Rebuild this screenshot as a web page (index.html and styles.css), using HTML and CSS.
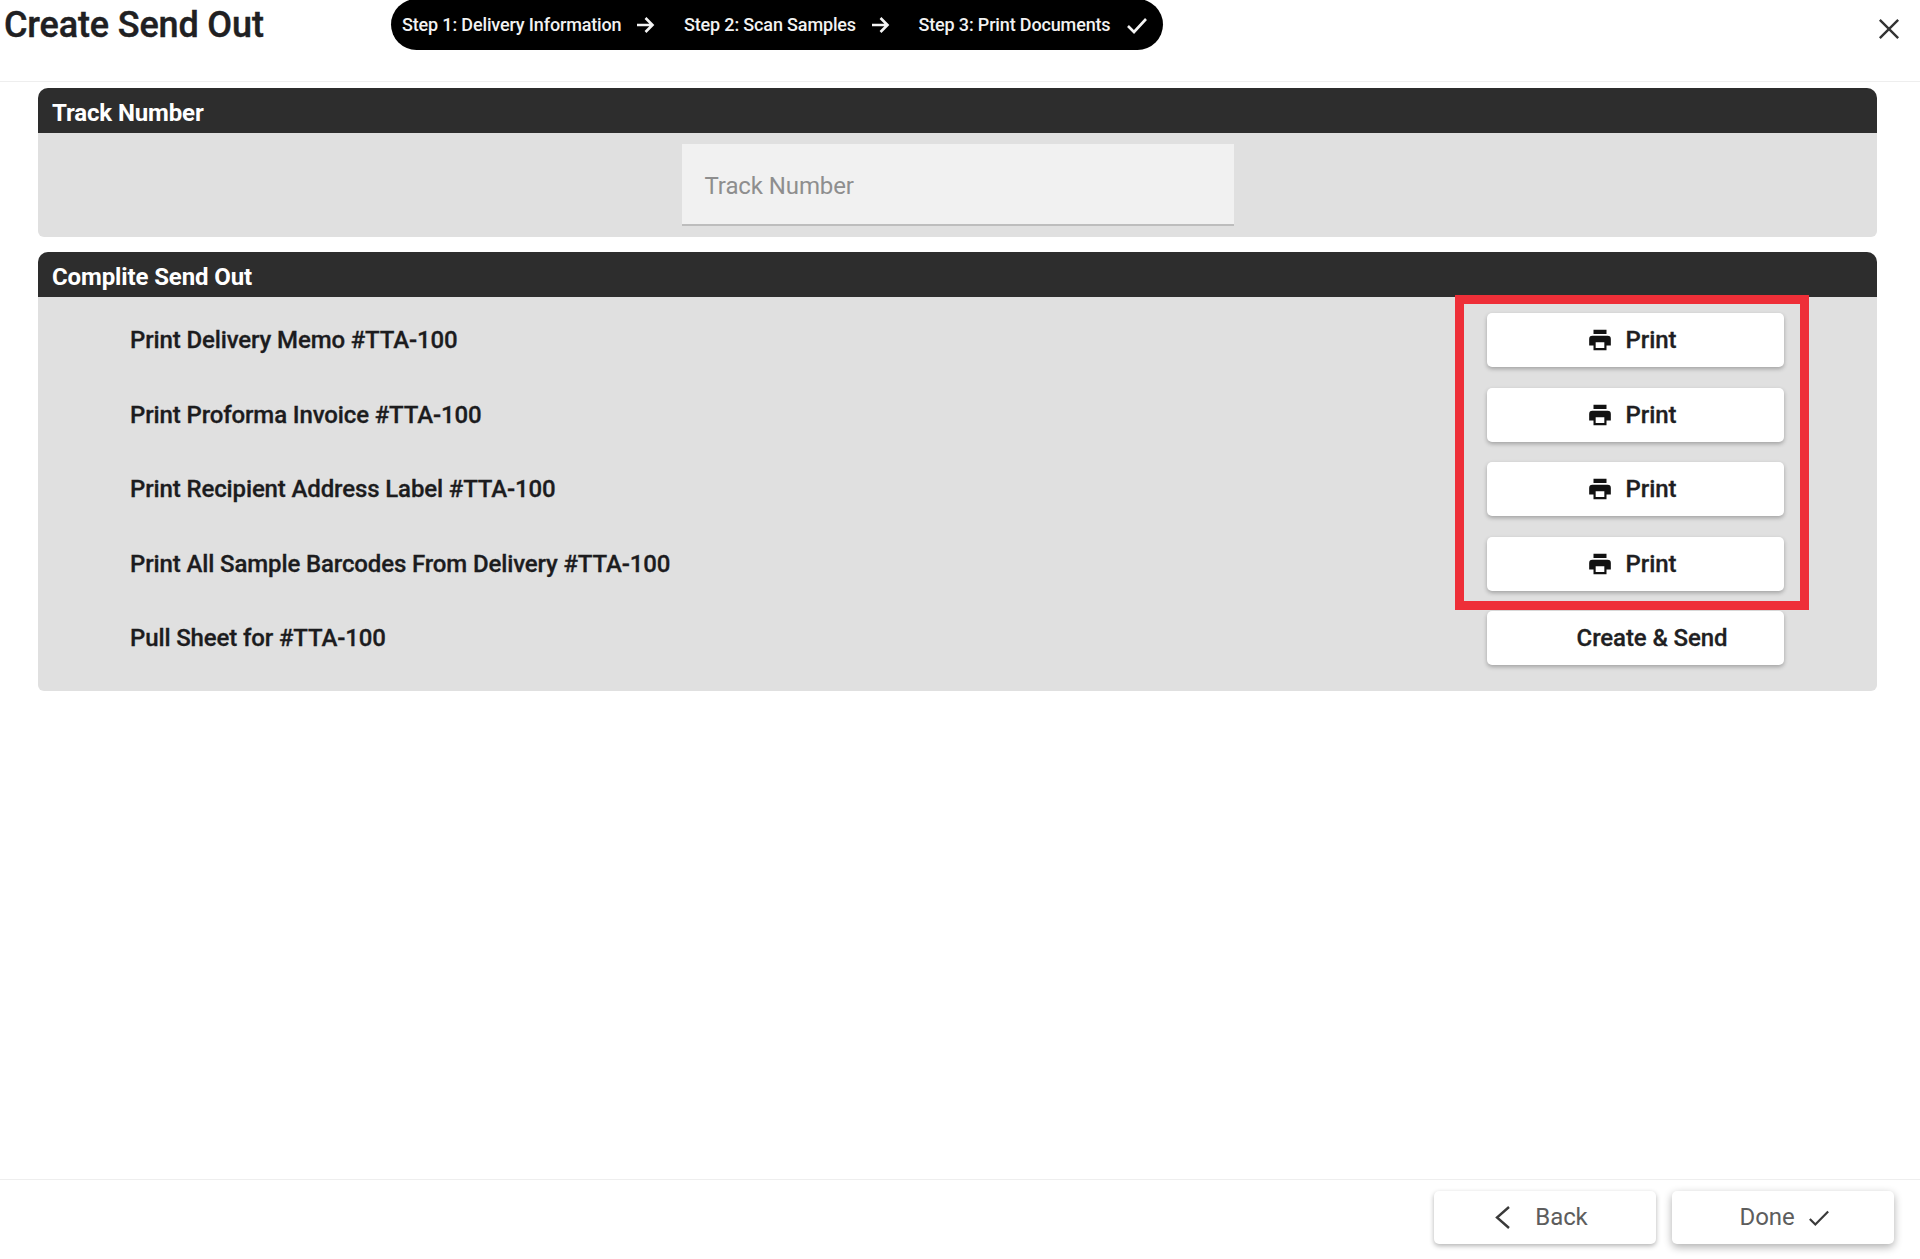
FILE: index.html
```html
<!DOCTYPE html>
<html lang="en">
<head>
<meta charset="utf-8">
<title>Create Send Out</title>
<link rel="stylesheet" href="styles.css">
</head>
<body>
<div class="dialog">
  <header class="top">
    <h1 class="title">Create Send Out</h1>
    <div class="stepper">
      <span class="step">Step 1: Delivery Information</span>
      <svg class="step-icon" viewBox="0 0 24 24"><path d="M4 12h15M12.500 5l7 7-7 7"/></svg>
      <span class="step">Step 2: Scan Samples</span>
      <svg class="step-icon" viewBox="0 0 24 24"><path d="M4 12h15M12.500 5l7 7-7 7"/></svg>
      <span class="step">Step 3: Print Documents</span>
      <svg class="step-icon step-done" viewBox="0 0 24 24"><path d="M3 13l6 6L21 6"/></svg>
    </div>
    <svg class="close" viewBox="0 0 24 24"><path d="M2 2l20 20M22 2L2 22"/></svg>
  </header>

  <main class="content">
    <section class="panel">
      <h2 class="panel-head">Track Number</h2>
      <div class="panel-body track-body">
        <div class="field">Track Number</div>
      </div>
    </section>

    <section class="panel">
      <h2 class="panel-head">Complite Send Out</h2>
      <div class="panel-body rows">
        <div class="row"><span>Print Delivery Memo #TTA-100</span><button class="btn"><svg class="printer" viewBox="0 0 24 24"><path d="M6 2.500h12v4H6zM19 8H5a3 3 0 0 0-3 3v6h4v4.500h12V17h4v-6a3 3 0 0 0-3-3zm-3 11.300H8V14h8z"/></svg>Print</button></div>
        <div class="row"><span>Print Proforma Invoice #TTA-100</span><button class="btn"><svg class="printer" viewBox="0 0 24 24"><path d="M6 2.500h12v4H6zM19 8H5a3 3 0 0 0-3 3v6h4v4.500h12V17h4v-6a3 3 0 0 0-3-3zm-3 11.300H8V14h8z"/></svg>Print</button></div>
        <div class="row"><span>Print Recipient Address Label #TTA-100</span><button class="btn"><svg class="printer" viewBox="0 0 24 24"><path d="M6 2.500h12v4H6zM19 8H5a3 3 0 0 0-3 3v6h4v4.500h12V17h4v-6a3 3 0 0 0-3-3zm-3 11.300H8V14h8z"/></svg>Print</button></div>
        <div class="row"><span>Print All Sample Barcodes From Delivery #TTA-100</span><button class="btn"><svg class="printer" viewBox="0 0 24 24"><path d="M6 2.500h12v4H6zM19 8H5a3 3 0 0 0-3 3v6h4v4.500h12V17h4v-6a3 3 0 0 0-3-3zm-3 11.300H8V14h8z"/></svg>Print</button></div>
        <div class="row"><span>Pull Sheet for #TTA-100</span><button class="btn btn-send">Create &amp; Send</button></div>
        <div class="highlight"></div>
      </div>
    </section>
  </main>

  <footer class="bottom">
    <button class="foot-btn back"><svg class="foot-icon chevron" viewBox="0 0 24 24"><path d="M17 2L5 12.500 17 23"/></svg>Back</button>
    <button class="foot-btn done">Done<svg class="foot-icon check" viewBox="0 0 24 24"><path d="M2 13l6 6L22 5"/></svg></button>
  </footer>
</div>
</body>
</html>
```

FILE: styles.css
```css
* { box-sizing: border-box; }
html, body { margin: 0; height: 100%; background: #fff; }
body { font-family: Roboto, "Liberation Sans", sans-serif; color: #1d1d1f; overflow: hidden; }
.dialog { height: 1259px; display: flex; flex-direction: column; }

.top { height: 82px; flex: none; display: flex; align-items: flex-start; border-bottom: 1px solid #eeeeee; }
.title { margin: 0; width: 391px; padding: 5px 0 0 4px; font-size: 36px; line-height: 40px; font-weight: 500; letter-spacing: -0.15px; color: #202022; -webkit-text-stroke: 0.4px #202022; }
.stepper { width: 772px; height: 51px; margin-top: -1px; padding: 0 14px 0 11px; display: flex; align-items: center; background: #000; border-radius: 26px; color: #f2f2f2; }
.step { font-size: 18px; font-weight: 500; letter-spacing: -0.15px; white-space: nowrap; }
.step-icon { width: 24px; height: 24px; margin: 0 26.500px 0 12px; fill: none; stroke: #f4f4f4; stroke-width: 2.600; flex: none; }
.step-done { margin: 0 0 0 15px; }
.close { width: 22px; height: 22px; margin: 18px 20px 0 auto; fill: none; stroke: #333; stroke-width: 2.600; }

.content { flex: 1; padding: 6px 43px 0 38px; display: flex; flex-direction: column; gap: 15px; }
.panel { background: #e0e0e0; border-radius: 10px 10px 6px 6px; }
.panel-head { margin: 0; height: 45px; padding: 5px 14px 0; display: flex; align-items: center; background: #2d2d2d; color: #fff; border-radius: 10px 10px 0 0; font-size: 24px; font-weight: 700; letter-spacing: -0.12px; }
.track-body { height: 104px; padding-top: 11px; display: flex; justify-content: center; }
.field { width: 552px; height: 82px; padding: 3px 23px 0; display: flex; align-items: center; background: #f1f1f1; border-bottom: 2px solid #bdbdbd; color: #8e8e8e; font-size: 24px; letter-spacing: -0.1px; }
.rows { position: relative; height: 394px; padding: 16px 93px 0 92px; display: flex; flex-direction: column; gap: 20.500px; }
.row { height: 54px; display: flex; align-items: center; justify-content: space-between; font-size: 24px; font-weight: 500; letter-spacing: -0.13px; color: #1c1c1e; -webkit-text-stroke: 0.3px #1c1c1e; }
.btn { width: 297px; height: 54px; padding: 0 8px 0 0; border: 0; border-radius: 5px; background: #fff; box-shadow: 0 2px 4px rgba(0,0,0,.28); display: flex; align-items: center; justify-content: center; gap: 13px; font: 500 24px Roboto, sans-serif; letter-spacing: -0.1px; color: #1f1f23; -webkit-text-stroke: 0.3px #1f1f23; }
.printer { width: 26px; height: 26px; fill: #111; }
.btn-send { padding: 0 0 0 33px; }
.highlight { position: absolute; left: 1417px; top: -2px; width: 354px; height: 315px; border: 9px solid #ee2f38; pointer-events: none; }

.bottom { height: 80px; flex: none; border-top: 1px solid #eeeeee; padding: 11px 26px 0 0; display: flex; justify-content: flex-end; gap: 16px; }
.foot-btn { width: 222px; height: 53px; padding: 0 0 2px; border: 0; border-radius: 5px; background: #fff; box-shadow: 0 2px 5px rgba(0,0,0,.3); display: flex; align-items: center; justify-content: center; font: 400 24px Roboto, sans-serif; letter-spacing: -0.1px; color: #5d5d5d; }
.back { padding-right: 10px; }
.done { padding-left: 3px; box-shadow: 0 3px 8px rgba(0,0,0,.32); }
.foot-icon { fill: none; stroke: #3a3a3a; stroke-width: 2.400; flex: none; }
.chevron { width: 24px; height: 24px; margin: 0 19px 0 0; }
.check { width: 22px; height: 22px; margin: 2px 0 0 13px; }
```
